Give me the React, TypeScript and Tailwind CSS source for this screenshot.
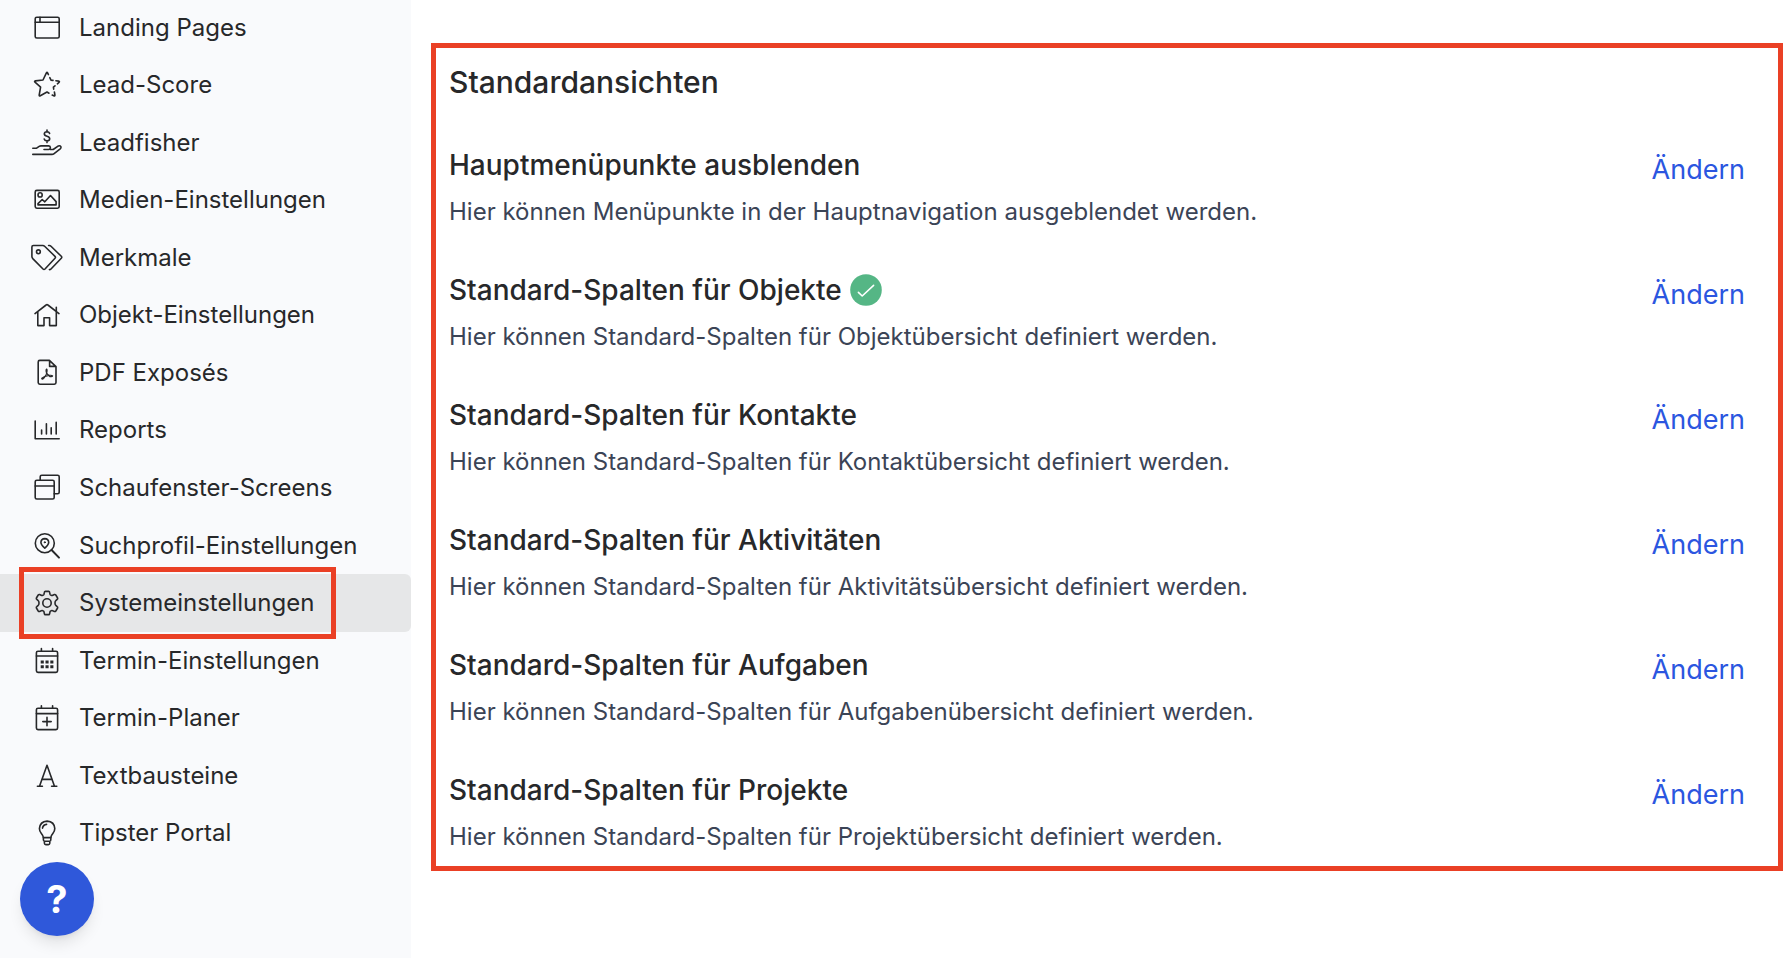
import type { ReactNode } from "react";

/* ---- Icons: 32px canvas, thin outline ------------------------------------ */

function Icon({ children }: { children: ReactNode }) {
  return (
    <svg
      viewBox="0 0 32 32"
      fill="none"
      stroke="currentColor"
      strokeWidth="1.6"
      strokeLinecap="round"
      strokeLinejoin="round"
      className="size-8 shrink-0"
      aria-hidden="true"
    >
      {children}
    </svg>
  );
}

const ICONS = {
  window: (
    <>
      <rect x="4.2" y="5.2" width="24" height="20.8" rx="1.6" />
      <path d="M4.2 10.2H28.2M9 5.2V10.2" />
    </>
  ),
  star: (
    <>
      <path d="M17.4 5.6 16.6 3.9Q16 2.8 15.4 3.9L12 11 4.4 11.9Q3 12.2 4 13.2L9.6 18.2 8.2 26Q8.1 27.4 9.3 26.8L16 23 18 24.2" />
      <path d="M18.8 8.6 20 11.1 22 11.4M24.9 11.8 27.6 12.1Q29 12.4 28 13.4L26.4 14.8M24 16.8 22.4 18.2 22.7 20.2M23.4 23 23.9 26Q24 27.4 22.8 26.8L21.2 26" />
    </>
  ),
  hand: (
    <>
      <path d="M18.6 6.4Q18 4.8 16 4.8 13.4 4.9 13.3 6.9 13.4 8.6 16 9.2 18.7 9.9 18.7 11.8 18.5 13.8 16 13.9 13.6 13.8 13.2 12M16 3V4.8M16 13.9V15.6" />
      <path d="M1.8 21.2H5.6L8.2 19.4Q9 18.9 10 18.9H17.6Q19.4 19.1 19.4 20.8 19.3 22.4 17.6 22.5H13M19 22.5H22.2L27.4 18.9Q29 18.3 29.9 19.6 30.4 20.8 29.2 21.8L22.8 26.8Q22 27.4 21 27.4H1.8" />
    </>
  ),
  image: (
    <>
      <rect x="4.2" y="6.4" width="24" height="17.8" rx="1.6" />
      <circle cx="9.1" cy="10.9" r="2.1" />
      <path d="M7 20.9V19.6L11.2 15.5 13.8 17.8 19.5 11.5 25.1 17.6V20.9Z" />
    </>
  ),
  tags: (
    <>
      <path d="M.9 5Q.9 3.5 2.4 3.5H11.8Q12.8 3.5 13.6 4.3L24 14.3Q25 15.3 24 16.3L14 27Q13 28 12 27L1.8 16.6Q.9 15.6 .9 14.6Z" />
      <circle cx="7.4" cy="9.8" r="1.9" />
      <path d="M17.6 3.5H18.4Q19.2 3.5 20 4.3L30.3 14.3Q31.2 15.3 30.3 16.3L20 27Q19.4 27.6 18.4 27.6" />
    </>
  ),
  house: (
    <path d="M4 14.6 15.1 6Q16 5.2 16.9 6L28 14.6M6.8 12.8V26.6H13V18.8H18.6V26.6H25.3V12.8M25.3 12V8.2" />
  ),
  pdf: (
    <>
      <path d="M18.4 3.4H8.8Q7.2 3.4 7.2 5V25.6Q7.2 27.2 8.8 27.2H23.4Q25 27.2 25 25.6V9.6ZM18.6 3.6V9.4H24.8" />
      <path
        d="M15.6 12Q14.6 12.6 15.2 15 16.4 18.2 19 19.6 21.4 20 21.6 18.8 20.8 18 18 18.4 13.6 19 10.8 21.2 10.4 22.2 11.6 22.2 13.6 20.8 15.2 17.4 16.8 13 15.6 12Z"
        strokeWidth="1.2"
      />
    </>
  ),
  chart: <path d="M4.2 7V24.8H28.2M10.6 16V20M15.4 9.8V20M20.2 13.8V20M25.2 8.4V20" />,
  screens: (
    <>
      <rect x="4.2" y="8.2" width="19" height="18.8" rx="1.6" />
      <path d="M4.2 14H23.2M9.2 8.2V4.8Q9.2 3.2 10.8 3.2H26.6Q28.2 3.2 28.2 4.8V20.2Q28.2 21.8 26.6 21.8H23.2" />
    </>
  ),
  search: (
    <>
      <circle cx="13.8" cy="13.2" r="9.5" />
      <path d="M20.6 20 28 27.6" strokeWidth="2" />
      <path d="M13.8 18.2Q9.9 14.6 9.9 12.2 10.2 8.8 13.8 8.6 17.4 8.8 17.7 12.2 17.7 14.6 13.8 18.2Z" />
      <circle cx="13.8" cy="12.3" r=".6" fill="currentColor" strokeWidth="1" />
    </>
  ),
  gear: (
    <>
      <circle cx="16" cy="16" r="4.2" />
      <path d="M13.4 5.2Q13.5 4.4 14.4 4.4H17.6Q18.5 4.4 18.6 5.2L19 7.2Q19.3 8 20.2 8.3 21 8.6 21.8 8.2L23.4 7.5Q24.3 7.3 24.8 8L26.6 11Q27 11.8 26.2 12.4L24.8 13.6Q24 14.2 24 16 24 17.8 24.8 18.4L26.2 19.6Q27 20.2 26.6 21L24.8 24Q24.3 24.7 23.4 24.5L21.8 23.8Q21 23.4 20.2 23.7 19.3 24 19 24.8L18.6 26.8Q18.5 27.6 17.6 27.6H14.4Q13.5 27.6 13.4 26.8L13 24.8Q12.7 24 11.8 23.7 11 23.4 10.2 23.8L8.6 24.5Q7.7 24.7 7.2 24L5.4 21Q5 20.2 5.8 19.6L7.2 18.4Q8 17.8 8 16 8 14.2 7.2 13.6L5.8 12.4Q5 11.8 5.4 11L7.2 8Q7.7 7.3 8.6 7.5L10.2 8.2Q11 8.6 11.8 8.3 12.7 8 13 7.2Z" />
    </>
  ),
  calendar: (
    <>
      <rect x="5.4" y="6.2" width="21.2" height="21.2" rx="1.6" />
      <path d="M5.4 11H26.6M10.4 3.6V6.2M21.6 3.6V6.2" />
      <path
        d="M11.2 17H11.3M16 17H16.1M20.8 17H20.9M11.2 21.8H11.3M16 21.8H16.1M20.8 21.8H20.9"
        strokeWidth="3"
        strokeLinecap="square"
      />
    </>
  ),
  planner: (
    <>
      <rect x="5.4" y="6.2" width="21.2" height="21.4" rx="1.6" />
      <path d="M5.4 11.6H26.6M10.4 3.8V6.2M21.6 3.8V6.2M16 15.4V23.8M11.8 19.6H20.2" />
    </>
  ),
  type: <path d="M16 5.2 8.6 26M16 5.2 23.4 26M10.8 19.4H21.2M6.4 26.2H11.4M20.6 26.2H25.8" />,
  bulb: (
    <>
      <path d="M12.4 20.6Q12.2 18.6 10.2 16.2 8.4 14 8.4 11.6 8.9 4.6 16.1 4.1 23.4 4.6 23.8 11.6 23.8 14 22 16.2 20 18.6 19.8 20.6Z" />
      <path d="M12.4 20.6V22.8Q12.4 24 13.4 24.2H18.8Q19.8 24 19.8 22.8V20.6M13.4 24.2V26.2Q13.5 27.6 14.8 27.6H17.4Q18.7 27.6 18.8 26.2V24.2M11.5 11.2Q12 7.8 15.6 7.4" />
    </>
  ),
};

/* ---- Data ---------------------------------------------------------------- */

const NAV: { label: string; icon: keyof typeof ICONS; active?: boolean }[] = [
  { label: "Landing Pages", icon: "window" },
  { label: "Lead-Score", icon: "star" },
  { label: "Leadfisher", icon: "hand" },
  { label: "Medien-Einstellungen", icon: "image" },
  { label: "Merkmale", icon: "tags" },
  { label: "Objekt-Einstellungen", icon: "house" },
  { label: "PDF Exposés", icon: "pdf" },
  { label: "Reports", icon: "chart" },
  { label: "Schaufenster-Screens", icon: "screens" },
  { label: "Suchprofil-Einstellungen", icon: "search" },
  { label: "Systemeinstellungen", icon: "gear", active: true },
  { label: "Termin-Einstellungen", icon: "calendar" },
  { label: "Termin-Planer", icon: "planner" },
  { label: "Textbausteine", icon: "type" },
  { label: "Tipster Portal", icon: "bulb" },
];

const SETTINGS: { title: string; text: string; done?: boolean }[] = [
  { title: "Hauptmenüpunkte ausblenden", text: "Hier können Menüpunkte in der Hauptnavigation ausgeblendet werden." },
  { title: "Standard-Spalten für Objekte", text: "Hier können Standard-Spalten für Objektübersicht definiert werden.", done: true },
  { title: "Standard-Spalten für Kontakte", text: "Hier können Standard-Spalten für Kontaktübersicht definiert werden." },
  { title: "Standard-Spalten für Aktivitäten", text: "Hier können Standard-Spalten für Aktivitätsübersicht definiert werden." },
  { title: "Standard-Spalten für Aufgaben", text: "Hier können Standard-Spalten für Aufgabenübersicht definiert werden." },
  { title: "Standard-Spalten für Projekte", text: "Hier können Standard-Spalten für Projektübersicht definiert werden." },
];

/* ---- Sidebar ------------------------------------------------------------- */

function Sidebar() {
  return (
    <aside className="relative w-[411px] shrink-0 bg-[#f9fafc]">
      <nav className="-mt-px">
        <ul className="grid h-[863px] auto-rows-fr">
          {NAV.map((item) => (
            <li key={item.label} className="relative">
              <a
                href="#"
                aria-current={item.active ? "page" : undefined}
                className={
                  "flex h-full items-center gap-4 rounded-r-md pl-[31px] text-[24px] " +
                  (item.active ? "bg-[#e6e7e8]" : "")
                }
              >
                <Icon>{ICONS[item.icon]}</Icon>
                {item.label}
              </a>
              {item.active && (
                <span className="pointer-events-none absolute -top-[7px] -bottom-[7px] left-[19px] w-[317px] border-5 border-[#ea4025]" />
              )}
            </li>
          ))}
        </ul>
      </nav>
      <button
        type="button"
        aria-label="Hilfe"
        className="absolute top-[862px] left-5 flex size-[74px] items-center justify-center rounded-full bg-[#2f58da] text-[38px] font-bold text-white shadow-lg"
      >
        ?
      </button>
    </aside>
  );
}

/* ---- Settings list ------------------------------------------------------- */

function CheckBadge() {
  return (
    <svg viewBox="0 0 32 32" fill="none" className="size-8 shrink-0" role="img" aria-label="Aktiv">
      <circle cx="16" cy="16" r="15.8" fill="#55b685" />
      <path d="M8.4 18.4 12.2 22 23.6 11.4" stroke="white" strokeWidth="1.6" strokeLinecap="round" strokeLinejoin="round" />
    </svg>
  );
}

export default function App() {
  return (
    <div className="flex min-h-screen bg-white font-[Inter,sans-serif] text-[#27282a]">
      <Sidebar />
      <main className="min-w-0 flex-1 pt-[43px] pr-[9px] pl-5">
        <section className="border-5 border-[#ea4025] px-[13px] pt-3.5 pb-[11px]">
          <h1 className="text-[30px] leading-10 font-medium">Standardansichten</h1>
          <ul className="mt-[43px] flex flex-col gap-10">
            {SETTINGS.map((item) => (
              <li key={item.title} className="flex items-start justify-between pr-5">
                <div>
                  <h2 className="flex items-center gap-2 text-[28px] leading-10 font-medium">
                    {item.title}
                    {item.done && <CheckBadge />}
                  </h2>
                  <p className="mt-2 text-[24px] leading-[37px] text-[#3b4456]">{item.text}</p>
                </div>
                <a href="#" className="mt-[5px] text-[27px] leading-10 text-[#2b56e0]">
                  Ändern
                </a>
              </li>
            ))}
          </ul>
        </section>
      </main>
    </div>
  );
}
